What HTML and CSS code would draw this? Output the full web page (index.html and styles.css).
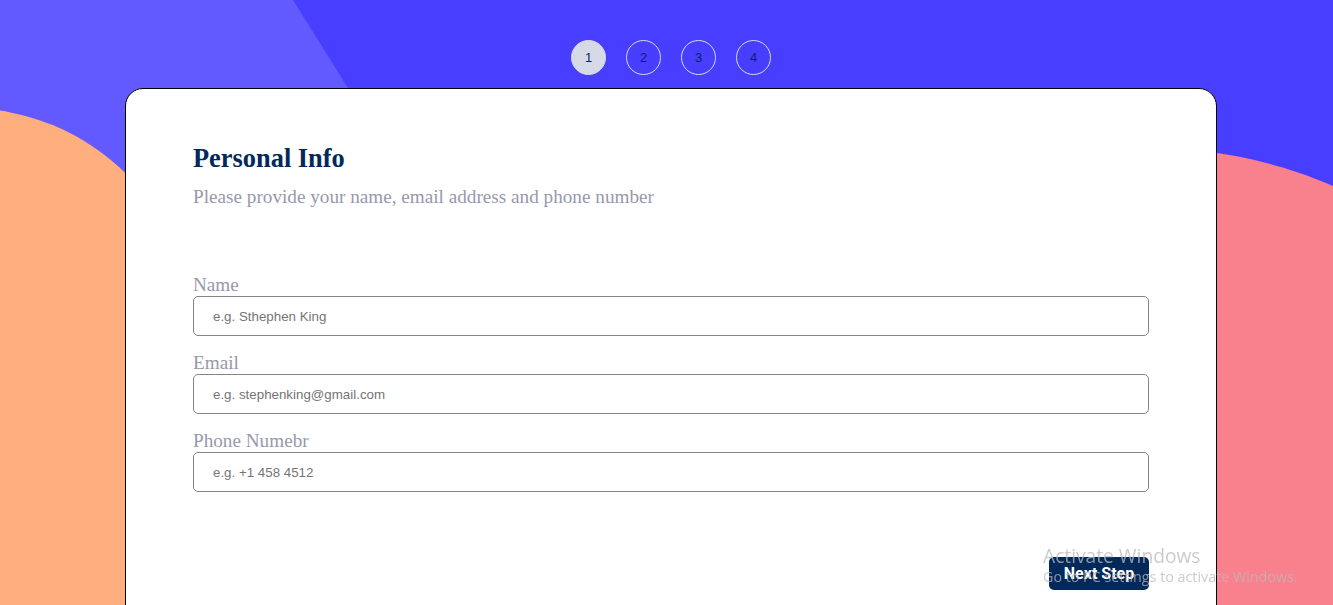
FILE: index.html
```html
<!DOCTYPE html>
<html lang="en">
<head>
<meta charset="utf-8">
<title>Multi-step form</title>
<link rel="stylesheet" href="styles.css">
</head>
<body>
<svg class="bg" viewBox="0 0 1333 605" preserveAspectRatio="none" aria-hidden="true">
  <rect x="0" y="0" width="1333" height="605" fill="#483eff"/>
  <polygon points="0,0 293,0 668,600 0,600" fill="#6259ff"/>
  <path d="M-34,108 A228 228 0 0 1 194 336 L194 605 L-34 605 Z" fill="#ffaf7e"/>
  <circle cx="1150" cy="608" r="460" fill="#f9818e"/>
</svg>

<main class="page">
  <ol class="steps">
    <li class="step active">1</li>
    <li class="step">2</li>
    <li class="step">3</li>
    <li class="step">4</li>
  </ol>

  <section class="card">
    <h1 class="title">Personal Info</h1>
    <p class="subtitle">Please provide your name, email address and phone number</p>

    <form class="form">
      <div class="field">
        <label class="label" for="name">Name</label>
        <input class="input" id="name" type="text" placeholder="e.g. Sthephen King">
      </div>
      <div class="field">
        <label class="label" for="email">Email</label>
        <input class="input" id="email" type="email" placeholder="e.g. stephenking@gmail.com">
      </div>
      <div class="field">
        <label class="label" for="phone">Phone Numebr</label>
        <input class="input" id="phone" type="tel" placeholder="e.g. +1 458 4512">
      </div>
      <div class="actions">
        <button class="next" type="button">Next Step</button>
      </div>
    </form>
  </section>
</main>

<div class="watermark" aria-hidden="true">
  <div class="wm-title">Activate Windows</div>
  <div class="wm-sub">Go to PC settings to activate Windows.</div>
</div>
</body>
</html>
```

FILE: styles.css
```css
html, body {
  margin: 0;
  padding: 0;
  height: 100%;
  overflow: hidden;
}

body {
  font-family: "Liberation Serif", "Times New Roman", serif;
  background: #483eff;
  position: relative;
}

.bg {
  position: absolute;
  top: 0;
  left: 0;
  width: 1333px;
  height: 605px;
  display: block;
}

.page {
  position: relative;
  margin-left: 125px;
  width: 1092px;
  padding-top: 40px;
}

.steps {
  list-style: none;
  margin: 0;
  padding: 0;
  display: flex;
  justify-content: center;
  gap: 20px;
}

.step {
  box-sizing: border-box;
  width: 35px;
  height: 35px;
  border-radius: 50%;
  border: 1px solid #d6d9e6;
  display: flex;
  align-items: center;
  justify-content: center;
  font-family: "Liberation Sans", Arial, sans-serif;
  font-size: 13px;
  color: #0a1f6a;
}

.step.active {
  background: #d6d9e6;
  color: #02295a;
}

.card {
  box-sizing: border-box;
  margin-top: 13px;
  width: 1092px;
  background: #fff;
  border: 1px solid #000;
  border-radius: 18px;
  padding: 54px 67px 60px;
}

.title {
  margin: 0;
  font-size: 26.4px;
  line-height: 30px;
  font-weight: 700;
  color: #02295a;
}

.subtitle {
  margin: 13px 0 0;
  font-size: 19.2px;
  line-height: 22px;
  color: #9699ab;
}

.form {
  margin-top: 66px;
  display: flex;
  flex-direction: column;
  gap: 16px;
}

.field {
  display: flex;
  flex-direction: column;
}

.label {
  font-size: 19.2px;
  line-height: 22px;
  color: #9699ab;
}

.input {
  box-sizing: border-box;
  height: 40px;
  width: 100%;
  border: 1px solid #858585;
  border-radius: 5px;
  padding: 0 19px;
  font-family: "Liberation Sans", Arial, sans-serif;
  font-size: 13.333px;
  color: #02295a;
  background: #fff;
  outline: none;
}

.input::placeholder {
  color: #757575;
}

.actions {
  display: flex;
  justify-content: flex-end;
  margin-top: 49px;
}

.next {
  width: 100px;
  height: 33px;
  border: none;
  border-radius: 5px;
  background: #02295a;
  color: #fff;
  font-family: Roboto, "Liberation Sans", sans-serif;
  font-weight: 700;
  font-size: 16px;
  padding: 0;
  cursor: pointer;
}

.watermark {
  position: fixed;
  left: 1043px;
  top: 543px;
  font-family: "Open Sans", "Noto Sans", sans-serif;
  color: rgba(185, 185, 185, 0.75);
  pointer-events: none;
  white-space: nowrap;
}

.wm-title {
  font-size: 19.2px;
  line-height: 25px;
}

.wm-sub {
  font-size: 14.3px;
  line-height: 18px;
}
```
